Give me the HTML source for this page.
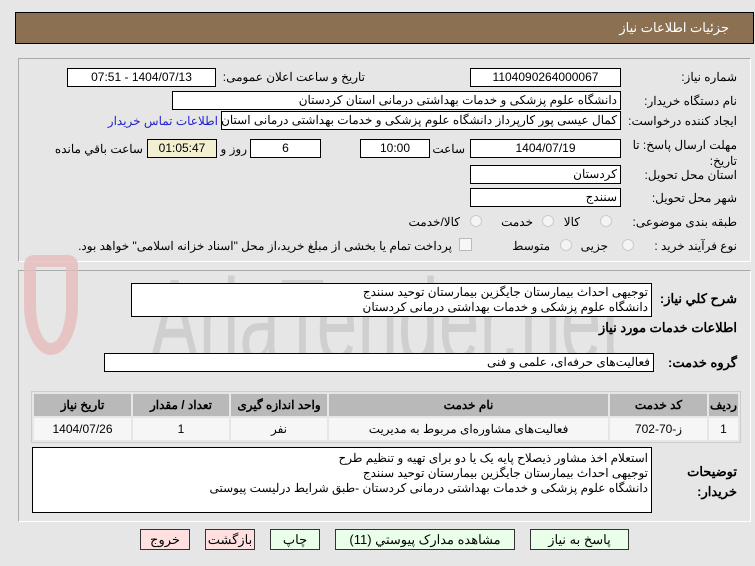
<!DOCTYPE html>
<html><head><meta charset="utf-8"><style>
*{box-sizing:border-box;margin:0;padding:0}
body{width:755px;height:566px;background:#e6e6e6;font-family:"Liberation Sans","Noto Sans CJK SC",sans-serif;font-size:12px;color:#000;position:relative;overflow:hidden}
.a{position:absolute;white-space:nowrap}
.box{position:absolute;background:#fff;border:1px solid #000;height:19px;line-height:17px;padding:0 3px;direction:rtl;white-space:nowrap;overflow:hidden}
.c{text-align:center}
.lbl{position:absolute;direction:rtl;white-space:nowrap}
.panel{position:absolute;border:1px solid #aaa;border-right-color:#fff;border-bottom-color:#fff;}
.rad{position:absolute;width:12px;height:12px;border-radius:50%;border:1px solid #ccc;background:#f4f4f4}
.btn{position:absolute;height:21px;border:1px solid #333;text-align:center;line-height:19px;font-size:13px;direction:rtl}
.g{background:#eaffea}.p{background:#ffe0e0}
table{position:absolute;border-collapse:separate;border-spacing:2px;background:#e6e6e6;border:1px solid #ccc}
td,th{text-align:center;height:22px;font-size:12px}
th{background:#b9b9b9;font-weight:bold}
td{background:#f6f6f6}
</style></head><body>
<div class="a" style="left:15px;top:12px;width:739px;height:32px;background:#8b7152;border:1px solid #000"></div>
<div class="lbl" style="right:26px;top:20px;color:#fff;font-size:13px">جزئیات اطلاعات نیاز</div>

<div class="panel" style="left:18px;top:58px;width:733px;height:204px"></div>
<div class="panel" style="left:18px;top:270px;width:733px;height:252px"></div>

<div class="a" style="left:150px;top:262px;font-size:118px;line-height:118px;color:#cfcfcf;font-family:'Liberation Sans',sans-serif;transform:scaleX(.62);transform-origin:left top;">AriaTender.net</div>
<div class="a" style="left:24px;top:255px;width:54px;height:100px;border:12px solid #e6bcbc;border-radius:10px 10px 50% 50%;opacity:.8"></div>

<div class="lbl" style="right:18px;top:70px">شماره نیاز:</div>
<div class="box c" style="left:470px;top:68px;width:151px">1104090264000067</div>
<div class="lbl" style="right:390px;top:70px">تاریخ و ساعت اعلان عمومی:</div>
<div class="box c" style="left:67px;top:68px;width:149px">1404/07/13 - 07:51</div>

<div class="lbl" style="right:18px;top:94px">نام دستگاه خریدار:</div>
<div class="box" style="left:172px;top:91px;width:449px">دانشگاه علوم پزشکی و خدمات بهداشتی  درمانی استان کردستان</div>

<div class="lbl" style="right:18px;top:114px">ایجاد کننده درخواست:</div>
<div class="box" style="left:221px;top:111px;width:400px">کمال عیسی پور کارپرداز دانشگاه علوم پزشکی و خدمات بهداشتی  درمانی استان کردستان</div>
<div class="lbl" style="right:537px;top:114px;color:#2222cc">اطلاعات تماس خریدار</div>

<div class="lbl" style="right:18px;top:137px;line-height:16px">مهلت ارسال پاسخ: تا<br>تاریخ:</div>
<div class="box c" style="left:470px;top:139px;width:151px">1404/07/19</div>
<div class="lbl" style="right:290px;top:142px">ساعت</div>
<div class="box c" style="left:360px;top:139px;width:70px">10:00</div>
<div class="box c" style="left:250px;top:139px;width:71px">6</div>
<div class="lbl" style="right:508px;top:142px">روز و</div>
<div class="box c" style="left:147px;top:139px;width:70px;background:#f3f0d2">01:05:47</div>
<div class="lbl" style="right:612px;top:142px">ساعت باقي مانده</div>

<div class="lbl" style="right:18px;top:168px">استان محل تحویل:</div>
<div class="box" style="left:470px;top:165px;width:151px">کردستان</div>
<div class="lbl" style="right:18px;top:191px">شهر محل تحویل:</div>
<div class="box" style="left:470px;top:188px;width:151px">سنندج</div>

<div class="lbl" style="right:18px;top:215px">طبقه بندی موضوعی:</div>
<div class="rad" style="left:600px;top:215px"></div><div class="lbl" style="right:175px;top:215px">کالا</div>
<div class="rad" style="left:542px;top:215px"></div><div class="lbl" style="right:222px;top:215px">خدمت</div>
<div class="rad" style="left:470px;top:215px"></div><div class="lbl" style="right:295px;top:215px">کالا/خدمت</div>

<div class="lbl" style="right:18px;top:239px">نوع فرآیند خرید :</div>
<div class="rad" style="left:622px;top:239px"></div><div class="lbl" style="right:147px;top:239px">جزیی</div>
<div class="rad" style="left:560px;top:239px"></div><div class="lbl" style="right:205px;top:239px">متوسط</div>
<div class="a" style="left:459px;top:238px;width:13px;height:13px;border:1px solid #bbb;background:#f6f6f6"></div>
<div class="lbl" style="right:303px;top:239px">پرداخت تمام یا بخشی از مبلغ خرید،از محل "اسناد خزانه اسلامی" خواهد بود.</div>

<div class="lbl" style="right:18px;top:291px;font-weight:bold;font-size:13px">شرح کلي نیاز:</div>
<div class="box" style="left:131px;top:283px;width:521px;height:34px;line-height:15px;padding-top:1px">توجیهی احداث بیمارستان جایگزین بیمارستان توحید سنندج<br>دانشگاه علوم پزشکی و خدمات بهداشتی درمانی کردستان</div>
<div class="lbl" style="right:18px;top:320px;font-weight:bold;font-size:13px">اطلاعات خدمات مورد نیاز</div>
<div class="lbl" style="right:18px;top:355px;font-weight:bold;font-size:13px">گروه خدمت:</div>
<div class="box" style="left:104px;top:353px;width:550px">فعالیت‌های حرفه‌ای، علمی و فنی</div>

<table style="left:31px;top:391px;width:710px;direction:rtl">
<tr><th style="width:29px">ردیف</th><th style="width:97px">کد خدمت</th><th style="width:279px">نام خدمت</th><th style="width:96px">واحد اندازه گیری</th><th style="width:96px">تعداد / مقدار</th><th>تاریخ نیاز</th></tr>
<tr><td>1</td><td>ز-70-702</td><td>فعالیت‌های مشاوره‌ای مربوط به مدیریت</td><td>نفر</td><td>1</td><td>1404/07/26</td></tr>
</table>

<div class="lbl" style="right:18px;top:462px;font-weight:bold;font-size:13px;line-height:20px;text-align:right">توضیحات<br>خریدار:</div>
<div class="box" style="left:32px;top:447px;width:620px;height:66px;line-height:15px;padding-top:3px">استعلام اخذ مشاور ذیصلاح پایه یک یا دو برای تهیه و تنظیم طرح<br>توجیهی احداث بیمارستان جایگزین بیمارستان توحید سنندج<br>دانشگاه علوم پزشکی و خدمات بهداشتی درمانی کردستان -طبق شرایط درلیست پیوستی</div>

<div class="btn g" style="left:530px;top:529px;width:99px">پاسخ به نیاز</div>
<div class="btn g" style="left:335px;top:529px;width:180px">مشاهده مدارک پیوستي (11)</div>
<div class="btn g" style="left:270px;top:529px;width:50px">چاپ</div>
<div class="btn p" style="left:205px;top:529px;width:50px">بازگشت</div>
<div class="btn p" style="left:140px;top:529px;width:50px">خروج</div>
</body></html>
